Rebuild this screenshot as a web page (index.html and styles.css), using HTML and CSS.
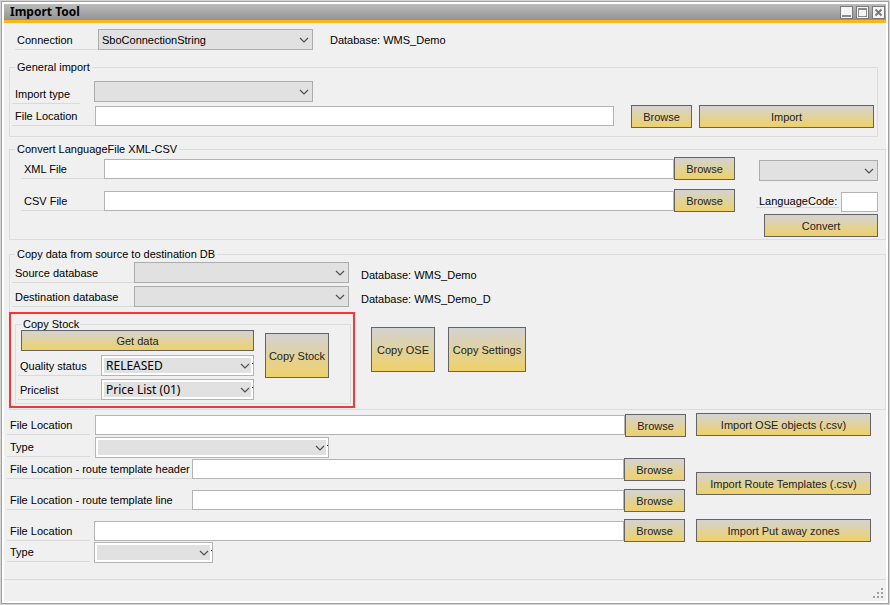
FILE: index.html
```html
<!DOCTYPE html>
<html lang="en">
<head>
  <meta charset="UTF-8">
  <meta name="viewport" content="width=device-width, initial-scale=1.0">
  <title>Import Tool</title>
  <link rel="stylesheet" href="styles.css">
</head>
<body>
  <svg class="sprite" aria-hidden="true">
    <symbol id="arrow" viewBox="0 0 10 6">
      <path d="M1 1l4 4 4-4" fill="none" stroke="#505050" stroke-width="1.2"/>
    </symbol>
  </svg>

  <div class="window">
    <div class="titlebar">
      <h1>Import Tool</h1>
      <div class="window-buttons">
        <button type="button" aria-label="Minimize">
          <svg viewBox="0 0 11 11"><path d="M1 8h9v2H1z" fill="#8a8a8a"/></svg>
        </button>
        <button type="button" aria-label="Maximize">
          <svg viewBox="0 0 11 11"><path d="M1 1h9v9H1zM2 3v6h7V3z" fill="#8a8a8a" fill-rule="evenodd"/></svg>
        </button>
        <button type="button" aria-label="Close">
          <svg viewBox="0 0 11 11"><path d="M2.500 2.500l6 6M8.500 2.500l-6 6" fill="none" stroke="#7a7a7a" stroke-width="2"/></svg>
        </button>
      </div>
    </div>

    <form class="content">
      <div class="row connection">
        <label for="connection">Connection</label>
        <div class="combo combo-wide">
          <select id="connection"><option>SboConnectionString</option></select>
          <svg><use href="#arrow"/></svg>
        </div>
        <span class="database">Database: WMS_Demo</span>
      </div>

      <fieldset class="general">
        <legend>General import</legend>
        <div class="row import-type">
          <label for="import-type">Import type</label>
          <div class="combo">
            <select id="import-type"><option></option></select>
            <svg><use href="#arrow"/></svg>
          </div>
        </div>
        <div class="row">
          <label for="general-file">File Location</label>
          <input type="text" id="general-file">
          <button type="button" class="browse">Browse</button>
          <button type="button" class="action">Import</button>
        </div>
      </fieldset>

      <fieldset class="convert">
        <legend>Convert LanguageFile XML-CSV</legend>
        <div class="convert-body">
          <div class="convert-files">
            <div class="row low">
              <label for="xml-file">XML File</label>
              <input type="text" id="xml-file">
              <button type="button" class="browse">Browse</button>
            </div>
            <div class="row low">
              <label for="csv-file">CSV File</label>
              <input type="text" id="csv-file">
              <button type="button" class="browse">Browse</button>
            </div>
          </div>
          <div class="convert-side">
            <div class="combo">
              <select aria-label="Conversion"><option></option></select>
              <svg><use href="#arrow"/></svg>
            </div>
            <div class="language">
              <label for="language-code">LanguageCode:</label>
              <input type="text" id="language-code">
            </div>
            <button type="button">Convert</button>
          </div>
        </div>
      </fieldset>

      <fieldset class="copy">
        <legend>Copy data from source to destination DB</legend>
        <div class="row db-row">
          <label for="source-db">Source database</label>
          <div class="combo combo-wide">
            <select id="source-db"><option></option></select>
            <svg><use href="#arrow"/></svg>
          </div>
          <span class="database">Database: WMS_Demo</span>
        </div>
        <div class="row db-row">
          <label for="destination-db">Destination database</label>
          <div class="combo combo-wide">
            <select id="destination-db"><option></option></select>
            <svg><use href="#arrow"/></svg>
          </div>
          <span class="database">Database: WMS_Demo_D</span>
        </div>

        <div class="copy-actions">
          <div class="highlight">
            <fieldset class="stock">
              <legend>Copy Stock</legend>
              <div class="stock-body">
                <div class="stock-fields">
                  <button type="button" class="get-data">Get data</button>
                  <div class="row">
                    <label for="quality">Quality status</label>
                    <div class="combo framed">
                      <select id="quality"><option>RELEASED</option></select>
                      <svg><use href="#arrow"/></svg>
                    </div>
                  </div>
                  <div class="row">
                    <label for="pricelist">Pricelist</label>
                    <div class="combo framed">
                      <select id="pricelist"><option>Price List (01)</option></select>
                      <svg><use href="#arrow"/></svg>
                    </div>
                  </div>
                </div>
                <button type="button" class="big copy-stock">Copy Stock</button>
              </div>
            </fieldset>
          </div>
          <button type="button" class="big copy-ose">Copy OSE</button>
          <button type="button" class="big copy-settings">Copy Settings</button>
        </div>
      </fieldset>

      <div class="import-group ose">
        <div class="import-fields">
          <div class="row">
            <label for="ose-file">File Location</label>
            <input type="text" id="ose-file">
            <button type="button" class="browse">Browse</button>
          </div>
          <div class="row">
            <label for="ose-type">Type</label>
            <div class="combo framed">
              <select id="ose-type"><option></option></select>
              <svg><use href="#arrow"/></svg>
            </div>
          </div>
        </div>
        <button type="button" class="action">Import OSE objects (.csv)</button>
      </div>

      <div class="import-group routes">
        <div class="import-fields">
          <div class="row">
            <label for="route-header">File Location - route template header</label>
            <input type="text" id="route-header">
            <button type="button" class="browse">Browse</button>
          </div>
          <div class="row">
            <label for="route-line">File Location - route template line</label>
            <input type="text" id="route-line">
            <button type="button" class="browse">Browse</button>
          </div>
        </div>
        <button type="button" class="action">Import Route Templates (.csv)</button>
      </div>

      <div class="import-group zones">
        <div class="import-fields">
          <div class="row low">
            <label for="zones-file">File Location</label>
            <input type="text" id="zones-file">
            <button type="button" class="browse">Browse</button>
          </div>
          <div class="row">
            <label for="zones-type">Type</label>
            <div class="combo framed">
              <select id="zones-type"><option></option></select>
              <svg><use href="#arrow"/></svg>
            </div>
          </div>
        </div>
        <button type="button" class="action">Import Put away zones</button>
      </div>
    </form>

    <div class="statusbar">
      <svg class="grip" viewBox="0 0 10 10">
        <path d="M8 0h2v2H8zM4 4h2v2H4zM8 4h2v2H8zM0 8h2v2H0zM4 8h2v2H4zM8 8h2v2H8z" fill="#a0a0a0"/>
      </svg>
    </div>
  </div>
</body>
</html>
```

FILE: styles.css
```css
* {
  box-sizing: border-box;
}

body {
  margin: 0;
  padding: 1px;
  min-height: 100vh;
  display: flex;
  background-color: #d4d4d4;
  font-family: "Liberation Sans", Arial, sans-serif;
  font-size: 11px;
  color: #000;
}

.sprite {
  position: absolute;
  width: 0;
  height: 0;
}

.window {
  flex: 1;
  display: flex;
  flex-direction: column;
  border: 1px solid #a0a0a0;
  padding: 2px;
  background-color: #fff;
}

/* title bar */
.titlebar {
  display: flex;
  justify-content: space-between;
  align-items: center;
  height: 19px;
  padding: 0 1px 0 6px;
  border-bottom: 3px solid #fdb813;
  background: linear-gradient(#bcbcbc, #929292);
}

.titlebar h1 {
  margin: 0;
  font-family: "Noto Sans", sans-serif;
  font-size: 12px;
  line-height: 16px;
  font-weight: bold;
}

.window-buttons {
  display: flex;
  gap: 3px;
}

.window-buttons button {
  width: 13px;
  height: 13px;
  border: 1px solid #7a7a7a;
  background: #f4f4f4;
}

.window-buttons svg {
  display: block;
  width: 11px;
  height: 11px;
}

/* controls */
button {
  flex: none;
  height: 23px;
  margin: 0;
  padding: 0;
  border: 1px solid #646464;
  background: linear-gradient(#d3d3d3, #efd168);
  font: inherit;
  color: #222;
  white-space: nowrap;
}

.browse {
  width: 61px;
}

.action {
  width: 175px;
}

.big {
  height: 45px;
}

input {
  flex: 1;
  min-width: 0;
  height: 20px;
  margin: 0;
  padding: 0 3px;
  border: 1px solid #b4b4b4;
  background-color: #fff;
  font: inherit;
}

.combo {
  position: relative;
  height: 21px;
}

.combo select {
  display: block;
  width: 100%;
  height: 100%;
  margin: 0;
  padding: 0 20px 0 3px;
  appearance: none;
  border: 1px solid #acacac;
  border-radius: 0;
  background-color: #e1e1e1;
  font: inherit;
  color: #000;
}

.combo svg {
  position: absolute;
  top: 8px;
  right: 4px;
  width: 10px;
  height: 6px;
  pointer-events: none;
}

.combo-wide {
  width: 215px;
}

.framed {
  padding: 2px;
  border: 1px solid #b4b4b4;
  background-color: #fff;
}

.framed select {
  border: 0;
  padding: 0 20px 0 2px;
  font-family: "Noto Sans", sans-serif;
  font-size: 12px;
  line-height: 14px;
}

.framed svg {
  top: 7px;
  right: 3px;
}

.framed::after {
  content: "";
  position: absolute;
  top: 7px;
  right: 0;
  width: 1px;
  height: 1px;
  background-color: #000;
}

.row {
  display: flex;
  align-items: flex-start;
}

.row label {
  flex: none;
  width: 83px;
  height: 20px;
  padding-left: 3px;
  border-bottom: 1px solid #d9d9d9;
  line-height: 21px;
  white-space: nowrap;
}

.row input,
.row label:has(+ input) {
  margin-top: 1px;
}

.low input,
.low label:has(+ input) {
  margin-top: 2px;
}

.database {
  line-height: 23px;
  height: 21px;
}

fieldset {
  min-width: 0;
  margin: 0 0 0 5px;
  padding: 0 0 0 2px;
  border: 1px solid #dcdcdc;
}

legend {
  margin-left: 3px;
  padding: 0 2px;
  line-height: 12px;
}

.content {
  flex: 1;
  padding-top: 6px;
  background-color: #f0f0f0;
}

.connection {
  padding-left: 11px;
}

.connection label {
  height: 21px;
  padding-left: 2px;
  line-height: 23px;
}

.connection .database {
  margin-left: 17px;
}

/* general import */
.general {
  margin-top: 11px;
  margin-right: 8px;
  padding-top: 8px;
  padding-right: 3px;
  padding-bottom: 8px;
}

.import-type {
  margin-bottom: 1px;
}

.import-type label {
  width: 68px;
  height: 23px;
  margin-right: 14px;
  line-height: 27px;
}

.import-type .combo {
  width: 219px;
}

.general .browse {
  margin: 0 7px 0 17px;
}

/* convert */
.convert {
  margin-top: 6px;
  padding-right: 7px;
  padding-bottom: 2px;
}

.convert-body {
  display: flex;
  gap: 24px;
  padding-left: 9px;
}

.convert-files {
  flex: 1;
  display: flex;
  flex-direction: column;
  gap: 9px;
  padding-top: 2px;
}

.convert-side {
  display: flex;
  flex-direction: column;
  width: 119px;
  padding-top: 5px;
}

.convert-side button {
  margin: 2px 0 0 5px;
}

.language {
  display: flex;
  gap: 2px;
  margin: 11px 0 0 -3px;
}

.language label {
  width: 83px;
  height: 16px;
  padding-left: 3px;
  border-bottom: 1px solid #d4dae0;
  line-height: 18px;
}

/* copy data */
.copy {
  margin-top: 8px;
  padding-top: 2px;
  padding-bottom: 1px;
}

.db-row {
  margin-bottom: 3px;
}

.db-row label {
  width: 122px;
  height: 21px;
  line-height: 23px;
}

.db-row .database {
  margin-left: 12px;
  line-height: 27px;
}

.copy-actions {
  display: flex;
  align-items: flex-start;
  margin: 5px 0 0 -3px;
}

.highlight {
  width: 346px;
  padding: 4px 2px 2px 4px;
  border: 2px solid #f83434;
}

.stock {
  margin: 0;
  padding-bottom: 3px;
}

.stock legend {
  margin-left: 4px;
  padding: 0 1px;
}

.stock-body {
  display: flex;
  align-items: flex-start;
  gap: 11px;
}

.stock-fields {
  display: flex;
  flex-direction: column;
  gap: 3px;
  width: 236px;
}

.stock-fields .combo {
  flex: 1;
}

.stock-fields label {
  height: 21px;
  padding-left: 2px;
  line-height: 23px;
}

.get-data {
  height: 21px;
  margin: 0 0 1px 3px;
}

.copy-stock {
  width: 64px;
  margin-top: 3px;
}

.copy-ose {
  width: 64px;
  margin: 15px 13px 0 16px;
}

.copy-settings {
  width: 78px;
  margin-top: 15px;
}

/* file imports */
.import-group {
  display: flex;
  align-items: flex-start;
  gap: 10px;
  padding: 0 15px 0 3px;
}

.import-fields {
  flex: 1;
}

.ose {
  margin-top: 3px;
}

.ose .import-fields {
  padding-top: 1px;
}

.ose label {
  margin-right: 5px;
}

.ose .combo {
  width: 234px;
}

.routes {
  gap: 11px;
}

.routes .import-fields {
  display: flex;
  flex-direction: column;
  gap: 8px;
}

.routes label {
  width: 185px;
}

.routes .action {
  margin-top: 14px;
}

.zones {
  gap: 11px;
  margin-top: 7px;
}

.zones label {
  margin-right: 4px;
}

.zones .combo {
  width: 119px;
}

/* status bar */
.statusbar {
  display: flex;
  justify-content: flex-end;
  align-items: flex-end;
  height: 22px;
  padding: 0 3px 3px;
  border-top: 1px solid #d9d9d9;
  background-color: #f0f0f0;
}

.grip {
  width: 10px;
  height: 10px;
}
```
